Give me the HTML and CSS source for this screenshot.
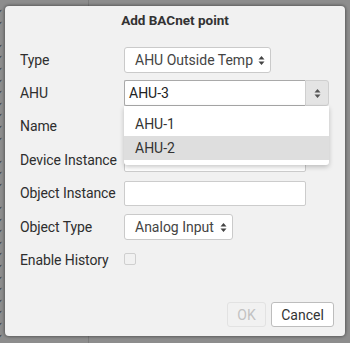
FILE: index.html
```html
<!DOCTYPE html>
<html>
<head>
<meta charset="utf-8">
<link rel="stylesheet" href="styles.css">
</head>
<body>
<div class="backdrop">
  <div class="marks">✓<br>✓<br><br>✓<br>✓<br>✓<br>✓<br>✓<br>✓<br>✓<br>✓<br>✓<br><br>✓<br>✓<br>✓<br><br>✓<br>✓<br>✓<br>✓<br>✓<br>✓<br>✓<br>✓<br>✓<br>✓<br>✓<br>✓</div>
  <div class="vline"></div>
</div>
<div class="dialog">
  <div class="title">Add BACnet point</div>
  <div class="form">
    <div class="label">Type</div>
    <div class="ctl"><div class="select sel-type">AHU Outside Temp<svg class="arr" width="7" height="11" viewBox="0 0 7 11"><path d="M3.5 1 L6.5 4.5 L0.5 4.5 Z M3.5 10 L6.5 6.5 L0.5 6.5 Z" fill="#444"/></svg></div></div>

    <div class="label">AHU</div>
    <div class="ctl"><div class="combo"><div class="combo-input">AHU-3</div><div class="combo-btn"><svg width="7" height="11" viewBox="0 0 7 11"><path d="M3.5 1 L6.5 4.5 L0.5 4.5 Z M3.5 10 L6.5 6.5 L0.5 6.5 Z" fill="#555"/></svg></div></div></div>

    <div class="label">Name</div>
    <div class="ctl"><div class="input"></div></div>

    <div class="label">Device Instance</div>
    <div class="ctl"><div class="input"></div></div>

    <div class="label">Object Instance</div>
    <div class="ctl"><div class="input"></div></div>

    <div class="label">Object Type</div>
    <div class="ctl"><div class="select sel-obj">Analog Input<svg class="arr" width="7" height="11" viewBox="0 0 7 11"><path d="M3.5 1 L6.5 4.5 L0.5 4.5 Z M3.5 10 L6.5 6.5 L0.5 6.5 Z" fill="#444"/></svg></div></div>

    <div class="label">Enable History</div>
    <div class="ctl"><div class="check"></div></div>
  </div>
  <div class="footer">
    <div class="btn btn-ok">OK</div>
    <div class="btn btn-cancel">Cancel</div>
  </div>
</div>
<div class="dropdown">
  <div class="item">AHU-1</div>
  <div class="item item-hl">AHU-2</div>
</div>
</body>
</html>
```

FILE: styles.css
```css
html, body {
  margin: 0;
  padding: 0;
}
body {
  width: 350px;
  height: 343px;
  overflow: hidden;
  background: #8d8d8d;
  font-family: Roboto, "Liberation Sans", sans-serif;
  color: #333;
  position: relative;
}
.backdrop {
  position: absolute;
  inset: 0;
}
.marks {
  position: absolute;
  left: -5px;
  top: 7px;
  font-size: 10px;
  line-height: 11.6px;
  color: #3a3a3a;
}
.vline {
  position: absolute;
  left: 88px;
  top: 0;
  width: 1px;
  height: 343px;
  background: #7c7c7c;
}
.dialog {
  position: absolute;
  left: 5px;
  top: 6px;
  width: 340px;
  height: 330px;
  background: #f1f1f1;
  border-radius: 4px;
  box-shadow: 0 0 3px 1px rgba(0,0,0,0.35);
  display: flex;
  flex-direction: column;
  box-sizing: border-box;
}
.title {
  height: 37px;
  padding-top: 6px;
  box-sizing: border-box;
  text-align: center;
  font-weight: bold;
  font-size: 13.5px;
  line-height: 16px;
  color: #333;
}
.form {
  display: grid;
  grid-template-columns: 104px 1fr;
  grid-auto-rows: 33.4px;
  padding-left: 15px;
  align-items: center;
}
.label {
  font-size: 14px;
  color: #2e2e2e;
  white-space: nowrap;
  letter-spacing: -0.1px;
}
.ctl {
  display: flex;
  align-items: center;
}
.select {
  height: 26px;
  box-sizing: border-box;
  background: #fff;
  border: 1px solid #cacaca;
  border-radius: 3px;
  display: flex;
  align-items: center;
  padding-left: 10px;
  font-size: 14px;
  color: #444;
  position: relative;
}
.sel-type { width: 147px; }
.sel-obj { width: 109px; }
.arr {
  position: absolute;
  right: 5px;
  top: 7px;
}
.combo {
  width: 205px;
  height: 26px;
  display: flex;
}
.combo-input {
  flex: 1;
  box-sizing: border-box;
  background: #fff;
  border: 1px solid #a9a9a9;
  border-right: none;
  border-radius: 2px 0 0 2px;
  font-size: 14px;
  color: #222;
  display: flex;
  align-items: center;
  padding-left: 4px;
}
.combo-btn {
  width: 24px;
  box-sizing: border-box;
  background: #e4e4e4;
  border: 1px solid #cfcfcf;
  border-radius: 0 3px 3px 0;
  display: flex;
  align-items: center;
  justify-content: center;
}
.input {
  width: 182px;
  height: 25px;
  box-sizing: border-box;
  background: #fff;
  border: 1px solid #cccccc;
  border-radius: 2px;
}
.check {
  width: 12px;
  height: 12px;
  box-sizing: border-box;
  border: 1px solid #cfcfcf;
  border-radius: 2px;
  background: #f1f1f1;
  margin-top: -2px;
}
.footer {
  margin-top: auto;
  display: flex;
  justify-content: flex-end;
  gap: 5px;
  padding: 0 11px 9px 0;
}
.btn {
  height: 25px;
  box-sizing: border-box;
  border-radius: 3px;
  font-size: 14px;
  display: flex;
  align-items: center;
  justify-content: center;
}
.btn-ok {
  width: 39px;
  border: 1px solid #e2e2e2;
  color: #c2c2c2;
  background: #f1f1f1;
}
.btn-cancel {
  width: 63px;
  border: 1px solid #bdbdbd;
  color: #333;
  background: #fff;
}
.dropdown {
  position: absolute;
  left: 124px;
  top: 106px;
  width: 205px;
  padding: 6px 0 5px;
  background: #fff;
  border-radius: 0 0 3px 3px;
  box-shadow: 0 2px 5px rgba(0,0,0,0.22);
}
.item {
  height: 24px;
  line-height: 24px;
  padding-left: 11px;
  font-size: 14px;
  color: #333;
}
.item-hl {
  background: #dedede;
}
```
